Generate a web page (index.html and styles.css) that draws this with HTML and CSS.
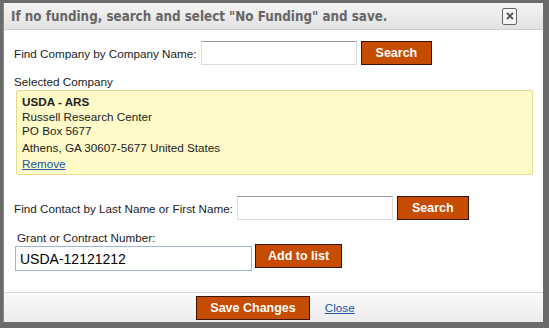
FILE: index.html
```html
<!DOCTYPE html>
<html lang="en">
<head>
    <meta charset="UTF-8">
    <title>Funding</title>
    <link rel="stylesheet" href="styles.css">
</head>
<body>
    <div class="dialog">
        <div class="dialog-title">
            <span>If no funding, search and select "No Funding" and save.</span>
            <span class="close-x">
                <svg width="10" height="10" viewBox="0 0 10 10"><path d="M2 2 L8 8 M8 2 L2 8" stroke="#555" stroke-width="1.8"/></svg>
            </span>
        </div>

        <div class="dialog-body">
            <!-- company search -->
            <div class="row row-company">
                <label>Find Company by Company Name:</label>
                <input type="text" class="text-input company-input">
                <button class="orange-btn">Search</button>
            </div>

            <div class="label-line">Selected Company</div>
            <div class="selected-box">
                <div class="company-name">USDA - ARS</div>
                <div class="addr-1">Russell Research Center</div>
                <div class="addr-2">PO Box 5677</div>
                <div class="addr-3">Athens, GA 30607-5677 United States</div>
                <a href="#" class="link">Remove</a>
            </div>

            <!-- contact search -->
            <div class="row row-contact">
                <label>Find Contact by Last Name or First Name:</label>
                <input type="text" class="text-input contact-input">
                <button class="orange-btn">Search</button>
            </div>

            <div class="grant-label">Grant or Contract Number:</div>
            <div class="row row-grant">
                <input type="text" class="text-input grant-input" value="USDA-12121212">
                <button class="orange-btn add-btn">Add to list</button>
            </div>
        </div>

        <div class="dialog-footer">
            <button class="orange-btn save-btn">Save Changes</button>
            <a href="#" class="link">Close</a>
        </div>
    </div>
</body>
</html>
```

FILE: styles.css
```css
body {
    margin: 0;
    background: #6b6b6b;
    font-family: "Liberation Sans", Arial, sans-serif;
    font-size: 11.7px;
    color: #222;
}
.dialog {
    margin: 3px 0 0 3px;
    width: 540px;
    height: 319px;
    background: #fff;
    border-left: 1px solid #888;
    box-sizing: border-box;
    display: flex;
    flex-direction: column;
}
.dialog-title {
    height: 27px;
    display: flex;
    align-items: center;
    justify-content: space-between;
    padding: 0 26px 0 7px;
    background: linear-gradient(#f4f4f4, #e2e2e2);
    border-bottom: 1px solid #cfcfcf;
    font-family: "DejaVu Sans Condensed", "DejaVu Sans", Verdana, sans-serif;
    font-stretch: condensed;
    font-weight: bold;
    font-size: 13.3px;
    color: #666;
    box-sizing: border-box;
}
.close-x {
    width: 13px;
    height: 15px;
    border: 1px solid #666;
    border-radius: 2px;
    background: #f6f6f6;
    display: flex;
    align-items: center;
    justify-content: center;
}
.dialog-body {
    flex: 1;
    padding: 11px 10px 0 10px;
}
.row {
    display: flex;
    align-items: center;
}
.row label {
    margin-right: 4px;
}
.text-input {
    height: 24px;
    box-sizing: border-box;
    border: 1px solid #dcdcdc;
    border-top-color: #9a9a9a;
    background: #fff;
    font-family: "Liberation Sans", Arial, sans-serif;
    padding: 0 4px;
}
.company-input {
    width: 156px;
}
.contact-input {
    width: 156px;
}
.orange-btn {
    height: 24px;
    background: #c64c00;
    border: 1px solid #3a1400;
    color: #fff;
    font-family: "Liberation Sans", Arial, sans-serif;
    font-weight: bold;
    font-size: 12.5px;
    padding: 0 14px;
    margin-left: 4px;
    cursor: pointer;
}
.label-line {
    margin-top: 10px;
    line-height: 14px;
}
.selected-box {
    margin: 1px 0 0 2px;
    width: 517px;
    height: 85px;
    box-sizing: border-box;
    background: #fffac8;
    border: 1px solid #e4dc8c;
    border-radius: 2px;
    padding: 4px 5px;
    line-height: 14.5px;
}
.company-name {
    font-weight: bold;
}
.addr-3 {
    margin-top: 2px;
}
.selected-box .link {
    display: inline-block;
    margin-top: 2px;
}
.link {
    color: #2155a8;
    text-decoration: underline;
}
.row-contact {
    margin-top: 21px;
}
.grant-label {
    margin: 12px 0 0 3px;
    line-height: 12px;
}
.row-grant {
    margin-left: 1px;
    align-items: flex-start;
}
.grant-input {
    width: 237px;
    height: 25px;
    border: 1px solid #9bb5dc;
    font-size: 14px;
    padding: 0 4px;
    margin-top: 2px;
    outline: none;
}
.add-btn {
    margin-left: 3px;
    padding: 0 12px;
}
.dialog-footer {
    height: 30px;
    border-top: 1px solid #dadada;
    background: linear-gradient(#fafafa, #ececec);
    display: flex;
    align-items: center;
    justify-content: center;
    gap: 15px;
    box-sizing: border-box;
}
.save-btn {
    padding: 0 13px;
}
```
